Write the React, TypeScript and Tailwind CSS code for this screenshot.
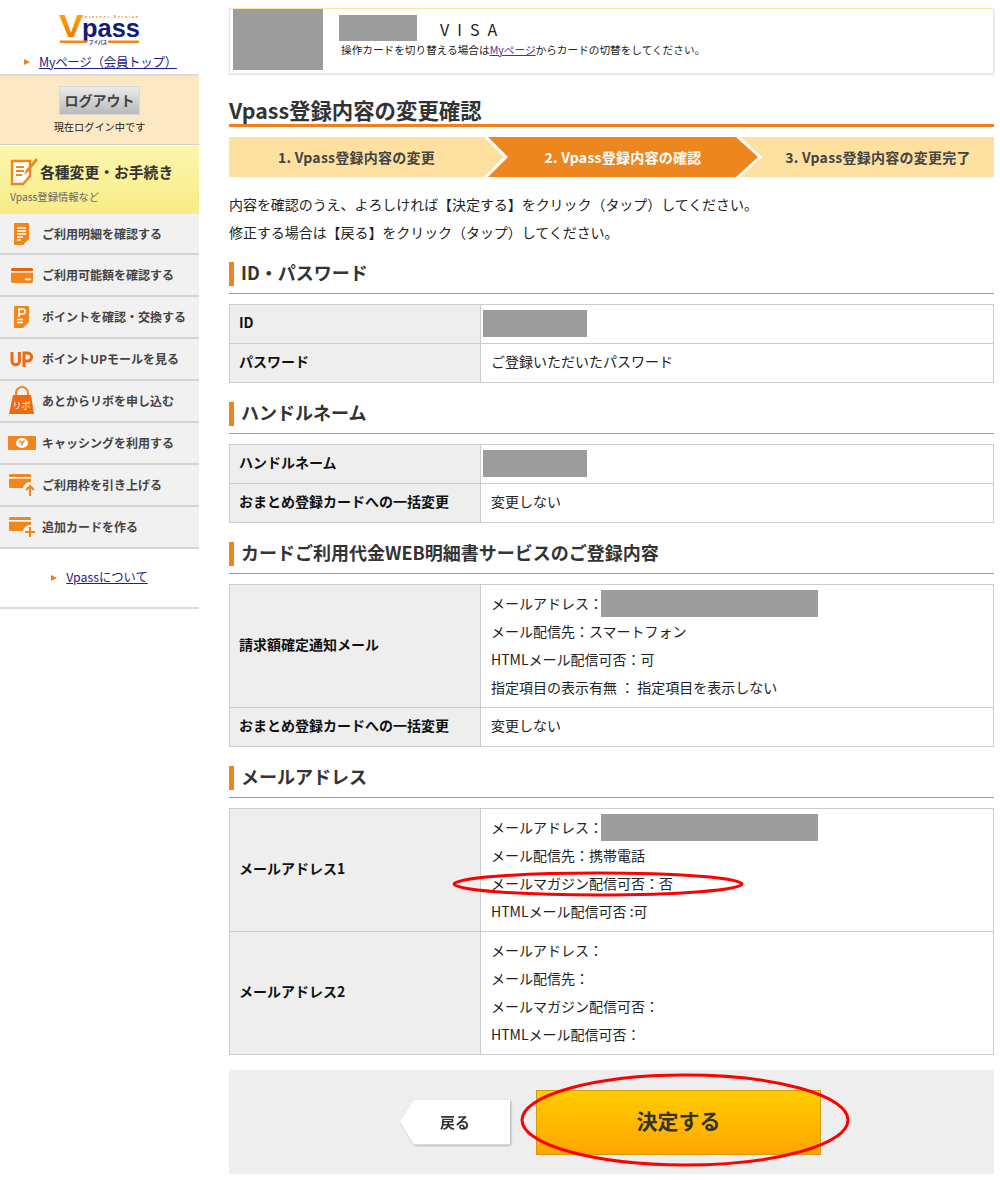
import React from "react";

const font = "font-['Noto_Sans_CJK_JP','Liberation_Sans',sans-serif]";

function Redact({ className }: { className: string }) {
  return <span className={"inline-block bg-[#9c9c9c] align-top " + className} />;
}

function Arrow() {
  return <span className="inline-block h-0 w-0 border-y-[3.5px] border-l-[6px] border-y-transparent border-l-[#ee7f1a]" />;
}

const icons: Record<string, React.ReactNode> = {
  statement: (
    <svg width="22" height="24" viewBox="0 0 22 24">
      <path d="M4 1h13a1 1 0 0 1 1 1v15l-6 6H4a1 1 0 0 1-1-1V2a1 1 0 0 1 1-1z" fill="#f0861c" />
      <path d="M6 6h9M6 9h9M6 12h9M6 15h6M6 18h4" stroke="#fff" strokeWidth="1.6" />
    </svg>
  ),
  card: (
    <svg width="22" height="24" viewBox="0 0 22 24">
      <rect x="0" y="5" width="22" height="15" rx="2" fill="#f0861c" />
      <path d="M0 7a2 2 0 0 1 2-2h18a2 2 0 0 1 2 2v1H0z" fill="#e8650f" />
      <rect x="0" y="8" width="22" height="1.6" fill="#fff" />
      <rect x="14" y="15.5" width="6" height="1.8" fill="#fff" />
    </svg>
  ),
  point: (
    <svg width="22" height="24" viewBox="0 0 22 24">
      <path d="M4 1h13a1 1 0 0 1 1 1v15l-6 6H4a1 1 0 0 1-1-1V2a1 1 0 0 1 1-1z" fill="#f0861c" />
      <path d="M8 12V4h3.5a2.4 2.4 0 0 1 0 5H8" fill="none" stroke="#fff" strokeWidth="1.6" />
      <path d="M6 14.5h6M6 17.5h6" stroke="#fff" strokeWidth="1.5" />
    </svg>
  ),
  up: (
    <svg width="24" height="24" viewBox="0 0 24 24">
      <path d="M2 5v9a3.6 3.6 0 0 0 7.4 0V5" fill="none" stroke="#ee6a0c" strokeWidth="3" />
      <path d="M14 20V6h3.6a3.7 3.7 0 0 1 0 8H14" fill="none" stroke="#ee6a0c" strokeWidth="3" />
    </svg>
  ),
  ribo: (
    <svg width="28" height="30" viewBox="0 0 28 30">
      <path d="M8 10V7a6 6 0 0 1 12 0v3" fill="none" stroke="#f0861c" strokeWidth="2" />
      <path d="M5 9h18l3 19H1z" fill="#ee6a0c" />
      <text x="13.5" y="23" fontSize="9" fill="#fff" textAnchor="middle" fontFamily="Noto Sans CJK JP">リボ</text>
    </svg>
  ),
  cash: (
    <svg width="28" height="16" viewBox="0 0 28 16">
      <rect width="28" height="14" y="1" fill="#f0861c" />
      <ellipse cx="14" cy="8" rx="6" ry="5" fill="#fff" />
      <path d="M11.5 5.5 14 8.5l2.5-3M14 8.5v2.5" fill="none" stroke="#f0861c" strokeWidth="1.3" />
    </svg>
  ),
  limit: (
    <svg width="27" height="24" viewBox="0 0 27 24">
      <rect x="0" y="1" width="22" height="14" rx="1.5" fill="#f0861c" />
      <rect x="0" y="4" width="22" height="1.6" fill="#fff" />
      <circle cx="21" cy="16" r="7" fill="#f1f1f1" />
      <path d="M21 23v-9M17 17l4-4 4 4" fill="none" stroke="#f0861c" strokeWidth="2" />
    </svg>
  ),
  add: (
    <svg width="27" height="24" viewBox="0 0 27 24">
      <rect x="0" y="2" width="22" height="14" rx="1.5" fill="#f0861c" />
      <rect x="0" y="5" width="22" height="1.6" fill="#fff" />
      <circle cx="21" cy="17" r="7" fill="#f1f1f1" />
      <path d="M21 12v10M16 17h10" fill="none" stroke="#f0861c" strokeWidth="2" />
    </svg>
  ),
};

const menu = [
  { icon: "statement", label: "ご利用明細を確認する" },
  { icon: "card", label: "ご利用可能額を確認する" },
  { icon: "point", label: "ポイントを確認・交換する" },
  { icon: "up", label: "ポイントUPモールを見る" },
  { icon: "ribo", label: "あとからリボを申し込む" },
  { icon: "cash", label: "キャッシングを利用する" },
  { icon: "limit", label: "ご利用枠を引き上げる" },
  { icon: "add", label: "追加カードを作る" },
];

function Logo() {
  return (
    <svg width="82" height="40" viewBox="0 0 82 40">
      <defs>
        <linearGradient id="vgrad" x1="0" y1="0" x2="0" y2="1">
          <stop offset="0" stopColor="#ffb100" />
          <stop offset="1" stopColor="#f06c00" />
        </linearGradient>
      </defs>
      <text x="0" y="30" fontSize="32" fontWeight="700" fontFamily="Liberation Sans" fill="url(#vgrad)" textLength="24" lengthAdjust="spacingAndGlyphs">V</text>
      <text x="23" y="30" fontSize="26" fontWeight="700" fontFamily="Liberation Sans" fill="#141a78" textLength="58" lengthAdjust="spacingAndGlyphs">pass</text>
      <text x="23" y="10.5" fontSize="4.2" fontWeight="700" fontFamily="Liberation Sans" fill="#ee861f" textLength="56" lengthAdjust="spacing">Internet Service</text>
      <rect x="1" y="33.5" width="27" height="2.5" fill="#f0861c" />
      <rect x="49" y="33.5" width="31" height="2.5" fill="#f0861c" />
      <text x="39" y="37" fontSize="4.6" fontWeight="700" fontFamily="Noto Sans CJK JP" fill="#141a78" textAnchor="middle">ブイパス</text>
    </svg>
  );
}

function Sidebar() {
  return (
    <aside className="w-[199px] shrink-0">
      <div className="flex h-[53px] justify-center pt-[7px]">
        <Logo />
      </div>
      <div className="flex h-[23px] items-center justify-center gap-[9px] border-b-2 border-[#dcdcdc] pb-[3px] pl-[2px] text-[12.5px] tracking-[-0.3px]">
        <Arrow />
        <a className="text-[#1d2088] underline">Myページ（会員トップ）</a>
      </div>
      <div className="flex h-[69px] flex-col items-center border-b border-[#cfcfcf] bg-[#fde8c4] pt-[10px]">
        <button className="h-[29px] w-[81px] border border-[#d8d8d8] bg-gradient-to-b from-[#ececec] to-[#b9b9b9] pb-[2px] text-[14px] font-bold leading-none text-[#444]">
          ログアウト
        </button>
        <span className="mt-[4px] text-[10.2px] leading-[15px] text-[#222]">現在ログイン中です</span>
      </div>
      <div className="mt-px flex h-[67px] flex-col bg-gradient-to-b from-[#fcf6ad] to-[#f8ec86] pl-[10px] pt-[10px]">
        <div className="flex items-center gap-[1px]">
          <svg width="29" height="31" viewBox="0 0 29 31">
            <path d="M2 5h18v15l-7 8H2z" fill="#fff" stroke="#f0861c" strokeWidth="2.4" />
            <path d="M6 11h8M6 15h8M6 19h6" stroke="#f0861c" strokeWidth="1.8" />
            <path d="M14 19l2-5L26 2l2 2-10 12z" fill="#f0861c" />
          </svg>
          <span className="mt-[2px] text-[14.8px] font-bold leading-none text-[#333]">各種変更・お手続き</span>
        </div>
        <span className="mt-[3px] text-[10.3px] leading-[14px] text-[#666]">Vpass登録情報など</span>
      </div>
      <ul>
        {menu.map((m) => (
          <li key={m.icon} className="flex h-[42px] items-center border-b-2 border-[#d4d4d4] bg-[#f1f1f1] first:border-t first:border-t-[#e6e6e6]">
            <span className="flex w-[42px] shrink-0 items-center justify-center pl-[2px]">{icons[m.icon]}</span>
            <span className="text-[12px] font-bold text-[#444]">{m.label}</span>
          </li>
        ))}
      </ul>
      <div className="flex h-[60px] items-center justify-center gap-[9px] border-b-2 border-[#dcdcdc] pb-[1px] text-[12.3px]">
        <Arrow />
        <a className="text-[#1d2088] underline">Vpassについて</a>
      </div>
    </aside>
  );
}

function Heading({ children }: { children: React.ReactNode }) {
  return (
    <div className="mb-[10px] border-b border-[#ee8a2c] pb-[7px]">
      <h3 className="h-6 border-l-[5px] border-[#ee861f] pl-[7px] text-[18px] font-bold leading-[21px] text-[#333]">{children}</h3>
    </div>
  );
}

function Row({ label, multi, children }: { label: string; multi?: boolean; children: React.ReactNode }) {
  return (
    <tr>
      <th className="w-[251px] border border-[#cccccc] bg-[#eeeeee] px-[9px] pb-[7px] pt-[3px] text-left text-[14px] font-bold leading-[28px] text-[#111]">
        {label}
      </th>
      <td className={multi ? "border border-[#cccccc] px-[10px] pb-[6px] pt-[4px] text-[14px] leading-[28px] text-[#222]" : "border border-[#cccccc] px-[10px] pb-[7px] pt-[3px] text-[14px] leading-[28px] text-[#222]"}>
        {children}
      </td>
    </tr>
  );
}

function Table({ children }: { children: React.ReactNode }) {
  return (
    <table className="w-full table-fixed border-collapse">
      <colgroup>
        <col className="w-[251px]" />
        <col />
      </colgroup>
      <tbody>{children}</tbody>
    </table>
  );
}

function Section({ title, children }: { title: string; children: React.ReactNode }) {
  return (
    <section className="mt-[19px]">
      <Heading>{title}</Heading>
      <Table>{children}</Table>
    </section>
  );
}

export default function App() {
  return (
    <div className={"flex h-[1180px] w-[1000px] overflow-hidden bg-white text-[#222] " + font}>
      <Sidebar />
      <main className="ml-[30px] w-[765px]">
        <div className="mt-[8px] flex h-[66px] border border-[#fde3a7] pl-[3px] shadow-[0_1px_2px_rgba(0,0,0,0.12)]">
          <Redact className="h-[61px] w-[90px]" />
          <div className="ml-[16px] pt-[6px]">
            <div className="flex items-end">
              <Redact className="h-[26px] w-[78px]" />
              <span className="ml-[23px] text-[16px] leading-[23px] tracking-[8px] text-[#222]">VISA</span>
            </div>
            <p className="ml-[2px] mt-[1px] text-[10.65px] leading-[16px] text-[#222]">
              操作カードを切り替える場合は<a className="text-[#5b2a9c] underline">Myページ</a>からカードの切替をしてください。
            </p>
          </div>
        </div>

        <h1 className="mt-[23px] border-b-[3px] border-[#ee7f1a] pb-[1px] text-[21.4px] font-bold leading-[26px] text-[#333]">
          Vpass登録内容の変更確認
        </h1>

        <div className="mt-[10px] flex h-10 bg-[#fee1a1] text-[14px] font-bold tracking-[0.25px] text-[#444]">
          <div className="flex w-[255px] items-center justify-center">1. Vpass登録内容の変更</div>
          <div className="h-10 w-[278px] bg-white px-[4px] [clip-path:polygon(0_0,calc(100%-22px)_0,100%_50%,calc(100%-22px)_100%,0_100%,20px_50%)]">
            <div className="flex h-full items-center justify-center bg-[#ee861f] text-white [clip-path:polygon(0_0,calc(100%-22px)_0,100%_50%,calc(100%-22px)_100%,0_100%,20px_50%)]">
              2. Vpass登録内容の確認
            </div>
          </div>
          <div className="flex flex-1 items-center justify-center">3. Vpass登録内容の変更完了</div>
        </div>

        <div className="mt-[13px] text-[14px] leading-[28px] tracking-[-0.06px] text-[#222]">
          <p>内容を確認のうえ、よろしければ【決定する】をクリック（タップ）してください。</p>
          <p>修正する場合は【戻る】をクリック（タップ）してください。</p>
        </div>

        <section className="mt-[16px]">
          <Heading>ID・パスワード</Heading>
          <Table>
            <Row label="ID">
              <Redact className="-mb-[1px] -ml-[8px] mt-[2px] h-[27px] w-[104px]" />
            </Row>
            <Row label="パスワード">ご登録いただいたパスワード</Row>
          </Table>
        </section>

        <Section title="ハンドルネーム">
          <Row label="ハンドルネーム">
            <Redact className="-mb-[1px] -ml-[8px] mt-[2px] h-[27px] w-[104px]" />
          </Row>
          <Row label="おまとめ登録カードへの一括変更">変更しない</Row>
        </Section>

        <Section title="カードご利用代金WEB明細書サービスのご登録内容">
          <Row label="請求額確定通知メール" multi>
            <div className="h-[28px]">メールアドレス：<Redact className="-ml-[2px] mt-px h-[27px] w-[217px]" /></div>
            <div>メール配信先：スマートフォン</div>
            <div>HTMLメール配信可否：可</div>
            <div>指定項目の表示有無 ： 指定項目を表示しない</div>
          </Row>
          <Row label="おまとめ登録カードへの一括変更">変更しない</Row>
        </Section>

        <Section title="メールアドレス">
          <Row label="メールアドレス1" multi>
            <div className="h-[28px]">メールアドレス：<Redact className="-ml-[2px] mt-px h-[27px] w-[217px]" /></div>
            <div>メール配信先：携帯電話</div>
            <div className="relative">
              メールマガジン配信可否：否
              <svg className="absolute left-[-40px] top-[2px]" width="294" height="28" viewBox="0 0 294 28">
                <ellipse cx="147" cy="13" rx="144" ry="11" fill="none" stroke="#f00" strokeWidth="3" />
              </svg>
            </div>
            <div>HTMLメール配信可否 :可</div>
          </Row>
          <Row label="メールアドレス2" multi>
            <div>メールアドレス：</div>
            <div>メール配信先：</div>
            <div>メールマガジン配信可否：</div>
            <div>HTMLメール配信可否：</div>
          </Row>
        </Section>

        <div className="relative mt-[15px] flex h-[104px] items-center justify-center gap-[26px] bg-[#eeeeee] pr-[2px]">
          <div className="drop-shadow-[1px_1px_1px_rgba(0,0,0,0.3)]">
            <button className="h-[45px] w-[110px] bg-white text-[15px] font-bold text-[#333] [clip-path:polygon(14px_0,100%_0,100%_100%,14px_100%,0_50%)]">
              戻る
            </button>
          </div>
          <button className="h-[65px] w-[285px] border border-[#d29a10] bg-gradient-to-b from-[#ffcc00] to-[#ffa600] pb-[2px] text-[21px] font-bold text-[#333]">
            決定する
          </button>
          <svg className="absolute left-[291px] top-[3px]" width="330" height="94" viewBox="0 0 330 94">
            <ellipse cx="165" cy="47" rx="163" ry="45" fill="none" stroke="#f00" strokeWidth="3" />
          </svg>
        </div>
      </main>
    </div>
  );
}
